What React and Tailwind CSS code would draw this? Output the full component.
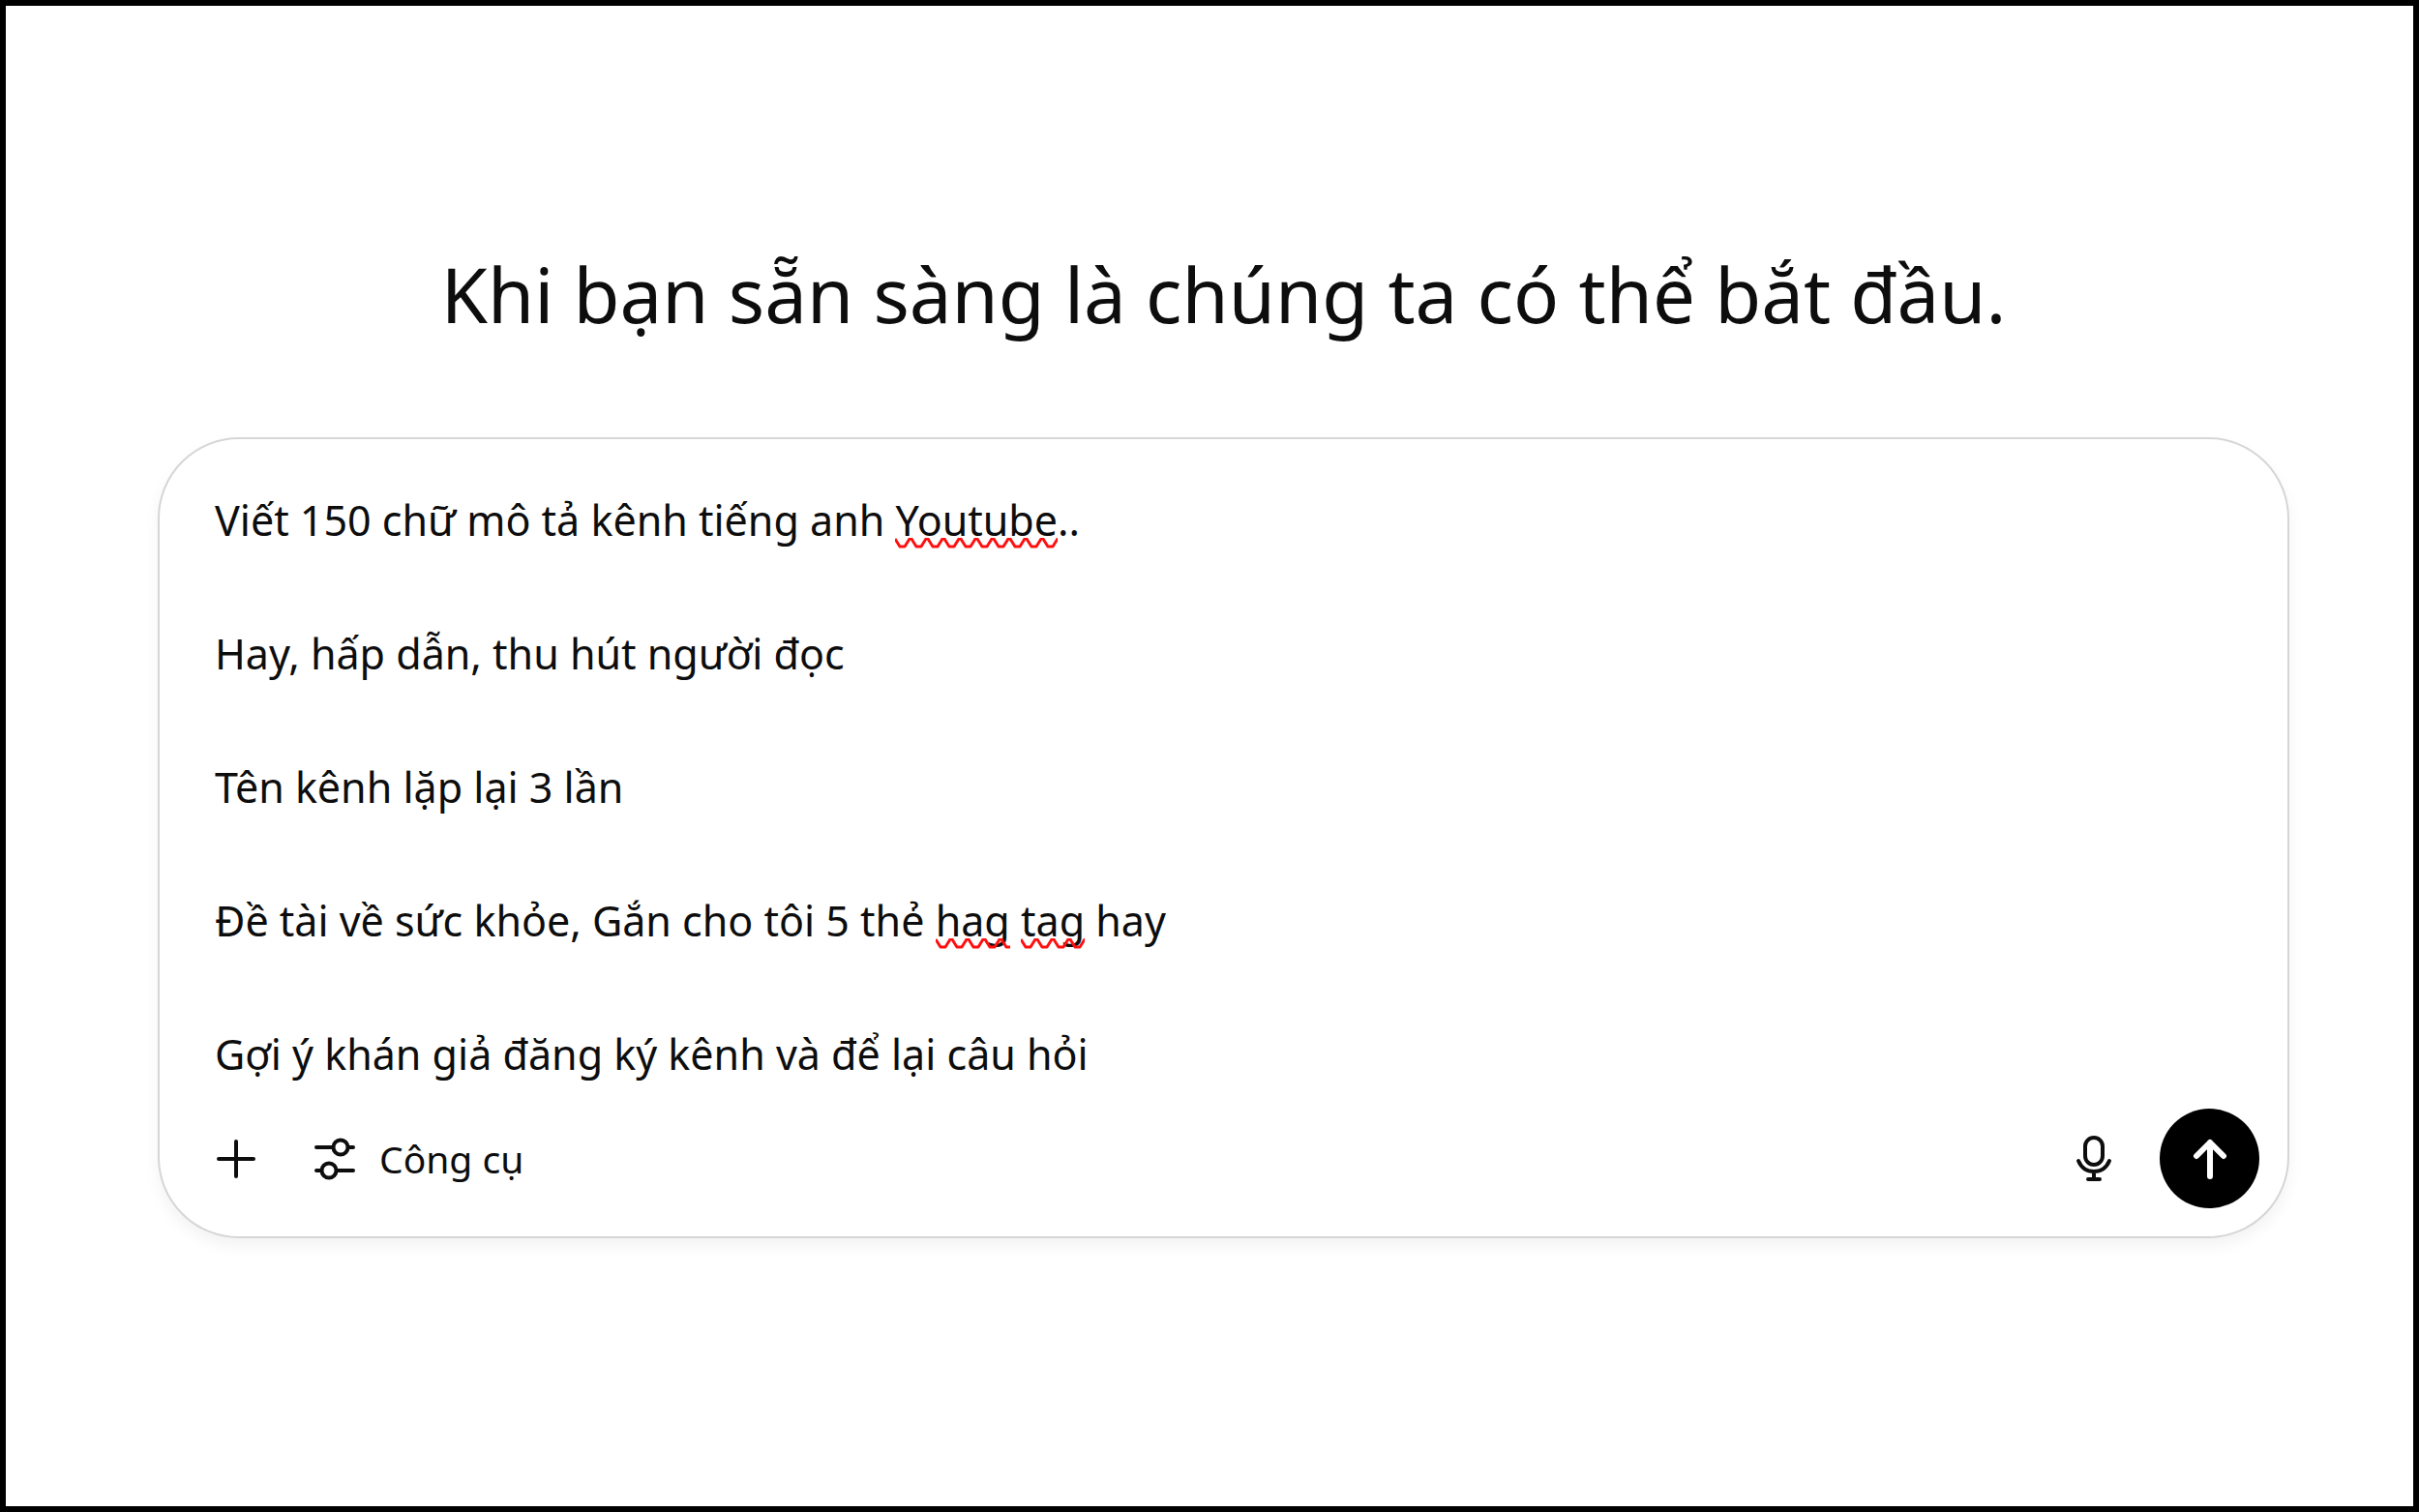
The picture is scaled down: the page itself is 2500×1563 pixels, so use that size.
import React from "react";

function Misspelled({ children }) {
  const count = Math.ceil(children.length * 1.6);
  let d = "M0 1";
  for (let i = 0; i < count; i++) {
    const x = i * 17;
    d += `L${x + 5} 9H${x + 10}L${x + 15} 1H${x + 17}`;
  }
  return (
    <span className="relative inline-block">
      {children}
      <svg aria-hidden="true" className="pointer-events-none absolute bottom-[5px] left-0 h-[11px] w-full overflow-hidden" fill="none" stroke="#ff1010" strokeWidth="3" strokeLinejoin="round">
        <path d={d} />
      </svg>
    </span>
  );
}

function PlusIcon() {
  return (
    <svg aria-hidden="true" className="size-[44px]" viewBox="0 0 44 44" fill="none" stroke="currentColor" strokeWidth="4" strokeLinecap="round">
      <path d="M22 4V40M4 22H40" />
    </svg>
  );
}

function SlidersIcon() {
  return (
    <svg aria-hidden="true" className="size-[44px]" viewBox="0 0 44 44" fill="none" stroke="currentColor" strokeWidth="4" strokeLinecap="round">
      <path d="M3 10H20M36 10H41M3 34H8M24 34H41" />
      <circle cx="28" cy="10" r="7.5" />
      <circle cx="16" cy="34" r="7.5" />
    </svg>
  );
}

function MicIcon() {
  return (
    <svg aria-hidden="true" className="size-[48px]" viewBox="0 0 48 48" fill="none" stroke="currentColor" strokeWidth="4" strokeLinecap="round" strokeLinejoin="round">
      <rect x="15" y="2" width="18" height="28" rx="9" />
      <path d="M8 26C11 33 17 37 24 37S37 33 40 26M24 37V45M18 45H30" />
    </svg>
  );
}

function ArrowUpIcon() {
  return (
    <svg aria-hidden="true" className="size-[48px]" viewBox="0 0 48 48" fill="none" stroke="currentColor" strokeWidth="6" strokeLinecap="round" strokeLinejoin="round">
      <path d="M24 42V7M10 21L24 7L38 21" />
    </svg>
  );
}

export default function App() {
  return (
    <main className="min-h-screen border-6 border-black bg-white pt-[238px] pr-[128px] pl-[157px] font-['Noto_Sans','Segoe_UI',sans-serif] text-[#0d0d0d]">
      <h1 className="text-center text-[78px] leading-[120px]">Khi bạn sẵn sàng là chúng ta có thể bắt đầu.</h1>
      <form
        onSubmit={(e) => e.preventDefault()}
        className="mt-[88px] rounded-[84px] border-2 border-[#d6d6d6] bg-white pt-[49px] pr-[29px] pb-[29px] pl-[57px] shadow-[0_8px_16px_rgba(0,0,0,0.05)]"
      >
        <div
          role="textbox"
          aria-multiline="true"
          aria-label="Tin nhắn"
          contentEditable
          suppressContentEditableWarning
          spellCheck={false}
          className="flex flex-col gap-[69px] text-[43px] leading-[69px] outline-none"
        >
          <p>Viết 150 chữ mô tả kênh tiếng anh <Misspelled>Youtube</Misspelled>..</p>
          <p>Hay, hấp dẫn, thu hút người đọc</p>
          <p>Tên kênh lặp lại 3 lần</p>
          <p>Đề tài về sức khỏe, Gắn cho tôi 5 thẻ <Misspelled>hag</Misspelled> <Misspelled>tag</Misspelled> hay</p>
          <p>Gợi ý khán giả đăng ký kênh và để lại câu hỏi</p>
        </div>
        <div className="mt-[22px] flex items-center">
          <button type="button" aria-label="Thêm">
            <PlusIcon />
          </button>
          <button type="button" className="ml-[58px] flex items-center gap-[24px] text-[39px] leading-[60px]">
            <SlidersIcon />
            Công cụ
          </button>
          <button type="button" aria-label="Đọc chính tả" className="ml-auto">
            <MicIcon />
          </button>
          <button type="submit" aria-label="Gửi" className="ml-[44px] flex size-[103px] items-center justify-center rounded-full bg-black text-white">
            <ArrowUpIcon />
          </button>
        </div>
      </form>
    </main>
  );
}
